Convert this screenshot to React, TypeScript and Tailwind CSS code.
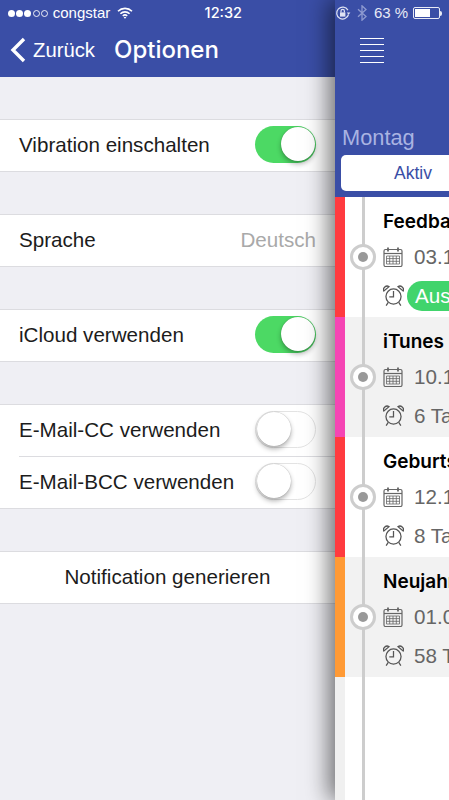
import type { ReactNode } from "react";

const font = "font-['Liberation_Sans',Arial,sans-serif]";
const mediumFont = "font-['Inter',Arial,sans-serif]";

// Settings sections on the left panel
type SettingRow =
  | { label: string; kind: "toggle"; on: boolean }
  | { label: string; kind: "value"; value: string }
  | { label: string; kind: "button" };

const sections: SettingRow[][] = [
  [{ label: "Vibration einschalten", kind: "toggle", on: true }],
  [{ label: "Sprache", kind: "value", value: "Deutsch" }],
  [{ label: "iCloud verwenden", kind: "toggle", on: true }],
  [
    { label: "E-Mail-CC verwenden", kind: "toggle", on: false },
    { label: "E-Mail-BCC verwenden", kind: "toggle", on: false },
  ],
  [{ label: "Notification generieren", kind: "button" }],
];

// Reminder list on the drawer
type Reminder = {
  title: string;
  date: string;
  left: string;
  overdue?: boolean;
  stripe: string;
  shaded: boolean;
};

const reminders: Reminder[] = [
  { title: "Feedback", date: "03.11.2014", left: "Ausstehend", overdue: true, stripe: "bg-[#ff3b3f]", shaded: false },
  { title: "iTunes", date: "10.11.2014", left: "6 Tage", stripe: "bg-[#f545b4]", shaded: true },
  { title: "Geburtstag", date: "12.11.2014", left: "8 Tage", stripe: "bg-[#ff3b3f]", shaded: false },
  { title: "Neujahr", date: "01.01.2015", left: "58 Tage", stripe: "bg-[#ff9a35]", shaded: true },
];

function Toggle({ on }: { on: boolean }) {
  return (
    <div
      className={`mb-[3px] flex h-[37px] w-[61px] items-center rounded-full px-[1px] ${
        on ? "justify-end bg-[#4cd964]" : "justify-start border border-[#e3e3e3] bg-white"
      }`}
    >
      <div className="h-[34px] w-[34px] rounded-full bg-white shadow-[0_3px_5px_rgba(0,0,0,0.3),0_0_1px_rgba(0,0,0,0.35)]" />
    </div>
  );
}

function Section({ rows }: { rows: SettingRow[] }) {
  return (
    <div className="border-y border-[#dcdce0] bg-white">
      {rows.map((row, i) => (
        <div key={row.label} className="pl-[19px]">
          <div
            className={`flex items-center pr-[19px] text-[20.6px] text-[#1c1c1c] ${
              row.kind === "button" ? "justify-center" : "justify-between"
            } ${i > 0 ? "h-[52px] border-t border-[#dcdce0]" : "h-[51px]"}`}
          >
            <span>{row.label}</span>
            {row.kind === "toggle" && <Toggle on={row.on} />}
            {row.kind === "value" && <span className="text-[#a9a9a9]">{row.value}</span>}
          </div>
        </div>
      ))}
    </div>
  );
}

function SignalDots() {
  return (
    <div className="flex items-center gap-[1.2px]">
      {[true, true, true, false, false].map((filled, i) => (
        <div
          key={i}
          className={`h-[7px] w-[7px] rounded-full border border-white/90 ${filled ? "bg-white" : ""}`}
        />
      ))}
    </div>
  );
}

function WifiIcon() {
  return (
    <svg width="16" height="12" viewBox="0 0 16 12" fill="none" stroke="white" strokeWidth="1.6">
      <path d="M1 4.2a10 10 0 0 1 14 0" />
      <path d="M3.4 6.7a6.6 6.6 0 0 1 9.2 0" />
      <path d="M5.8 9a3.2 3.2 0 0 1 4.4 0" />
      <path d="M8 11.8l-1.3-1.4a1.9 1.9 0 0 1 2.6 0z" fill="white" stroke="none" />
    </svg>
  );
}

function RotationLockIcon() {
  return (
    <svg width="16" height="16" viewBox="0 0 16 16" fill="none" stroke="#dfe3f3" strokeWidth="1.2">
      <path d="M13.5 9.5a6 6 0 1 1-.6-4.4" />
      <path d="M11.8 7.6h3.6l-1.8 2.2z" fill="#dfe3f3" stroke="none" />
      <rect x="5" y="7.4" width="5.4" height="4.2" fill="#dfe3f3" stroke="none" />
      <path d="M6 7.4V6a1.7 1.7 0 0 1 3.4 0v1.4" />
    </svg>
  );
}

function BluetoothIcon() {
  return (
    <svg width="10" height="16" viewBox="0 0 10 16" fill="none" stroke="#8e9ad0" strokeWidth="1.3">
      <path d="M1 4.2l8 7.4-4 3.6V0.8l4 3.6-8 7.4" />
    </svg>
  );
}

function BatteryIcon() {
  return (
    <div className="flex items-center">
      <div className="h-[12px] w-[27px] rounded-[2px] border border-[#e8eaf5] p-[1px]">
        <div className="h-full w-[63%] bg-white" />
      </div>
      <div className="h-[5px] w-[2px] rounded-r-sm bg-[#e8eaf5]" />
    </div>
  );
}

function CalendarIcon() {
  return (
    <svg width="20" height="20" viewBox="0 0 20 20" fill="none" stroke="#666" className="shrink-0">
      <rect x="1" y="2.5" width="18" height="17" rx="1.5" strokeWidth="1.2" />
      <path d="M1 6.5h18" strokeWidth="1.2" />
      <path d="M5 .5v4M15 .5v4" strokeWidth="1.8" />
      <path d="M3.5 9h13v8h-13zM3.5 11.6h13M3.5 14.3h13M6.7 9v8M10 9v8M13.3 9v8" strokeWidth="0.8" />
    </svg>
  );
}

function AlarmIcon() {
  return (
    <svg width="21" height="21" viewBox="0 0 20 20" fill="none" stroke="#555" strokeWidth="1.2" className="mb-[2px] shrink-0">
      <circle cx="10" cy="11" r="7.2" />
      <path d="M10 5.6v5.8H6" />
      <path d="M.8 5.8a3.4 3.4 0 0 1 5-4.2zM19.2 5.8a3.4 3.4 0 0 0-5-4.2z" />
      <path d="M5 16.6L3 19.6M15 16.6l2 3" />
    </svg>
  );
}

function Timeline({ children }: { children?: ReactNode }) {
  return (
    <div className="relative flex w-[38px] shrink-0 justify-center pr-[1px]">
      <div className="h-full w-[3px] bg-[#cdcdcd]" />
      {children}
    </div>
  );
}

function ReminderRow({ item }: { item: Reminder }) {
  return (
    <div className={`flex h-[120px] ${item.shaded ? "bg-[#f2f2f2]" : "bg-white"}`}>
      <div className={`w-[10px] shrink-0 ${item.stripe}`} />
      <Timeline>
        {/* dot sits over the line */}
        <div className="absolute left-[5px] top-[47px] flex h-[26px] w-[26px] items-center justify-center rounded-full border-[3px] border-[#cdcdcd] bg-white">
          <div className="h-[10px] w-[10px] rounded-full bg-[#999]" />
        </div>
      </Timeline>
      <div className="flex flex-col whitespace-nowrap pt-[12px]">
        <div className={`h-[26px] text-[19px] font-semibold leading-[26px] text-black ${mediumFont}`}>{item.title}</div>
        <div className="mt-[12px] flex h-[20px] items-center gap-[11px] text-[20.6px] text-[#666]">
          <CalendarIcon />
          <span>{item.date}</span>
        </div>
        <div className="mt-[17px] flex h-[24px] items-center text-[20.6px] text-[#666]">
          <AlarmIcon />
          {item.overdue ? (
            <span className="ml-[3px] rounded-full bg-[#41d46c] px-[8px] text-white">{item.left}</span>
          ) : (
            <span className="ml-[10px]">{item.left}</span>
          )}
        </div>
      </div>
    </div>
  );
}

export default function App() {
  return (
    <div className={`flex h-[800px] w-[449px] overflow-hidden bg-[#efeff4] ${font}`}>
      {/* Options screen */}
      <div className="w-[335px] shrink-0">
        <div className="h-[77px] bg-[#3a4ea6] text-white">
          <div className="flex h-[26px] items-center justify-between pl-[8px] pr-[93px] text-[15px]">
            <div className="flex items-center gap-[5px]">
              <SignalDots />
              <span>congstar</span>
              <span className="ml-[2px]">
                <WifiIcon />
              </span>
            </div>
            <span className={`text-[14.5px] font-medium ${mediumFont}`}>12:32</span>
          </div>
          <div className="flex h-[48px] items-center pl-[10px]">
            <svg width="16" height="26" viewBox="0 0 16 26" fill="none" stroke="white" strokeWidth="3.4">
              <path d="M14 2L3 13l11 11" />
            </svg>
            <span className="ml-[7px] text-[20.3px]">Zurück</span>
            <span className={`ml-[19px] text-[24px] font-medium ${mediumFont}`}>Optionen</span>
          </div>
        </div>
        <div className="flex flex-col gap-[42px] pt-[42px]">
          {sections.map((rows) => (
            <Section key={rows[0].label} rows={rows} />
          ))}
        </div>
      </div>

      {/* Drawer */}
      <div className="z-10 flex w-[114px] shrink-0 flex-col bg-white shadow-[-6px_0_22px_rgba(0,0,0,0.55)]">
        <div className="h-[197px] overflow-hidden bg-[#3a4ea6]">
          <div className="flex h-[26px] items-center whitespace-nowrap text-[15px] text-[#e8eaf5]">
            <RotationLockIcon />
            <span className="ml-[6px] flex">
              <BluetoothIcon />
            </span>
            <span className="ml-[7px]">63 %</span>
            <span className="ml-[5px]">
              <BatteryIcon />
            </span>
          </div>
          <div className="ml-[25px] mt-[12px] flex w-[24px] flex-col gap-[5px]">
            {[0, 1, 2, 3, 4].map((i) => (
              <div key={i} className="h-[1px] bg-white" />
            ))}
          </div>
          <div className="ml-[7px] mt-[63px] text-[21.8px] leading-[24px] text-[#a9b3e2]">Montag</div>
          <div className="ml-[6px] mt-[5px] flex h-[36px] w-[144px] items-center rounded-[5px] bg-white">
            <span className="w-full text-center text-[17.5px] text-[#3a4ea6]">Aktiv</span>
          </div>
        </div>
        {reminders.map((item) => (
          <ReminderRow key={item.title} item={item} />
        ))}
        <div className="flex flex-1">
          <div className="w-[10px] shrink-0 bg-[#f0f0f0]" />
          <Timeline />
        </div>
      </div>
    </div>
  );
}
